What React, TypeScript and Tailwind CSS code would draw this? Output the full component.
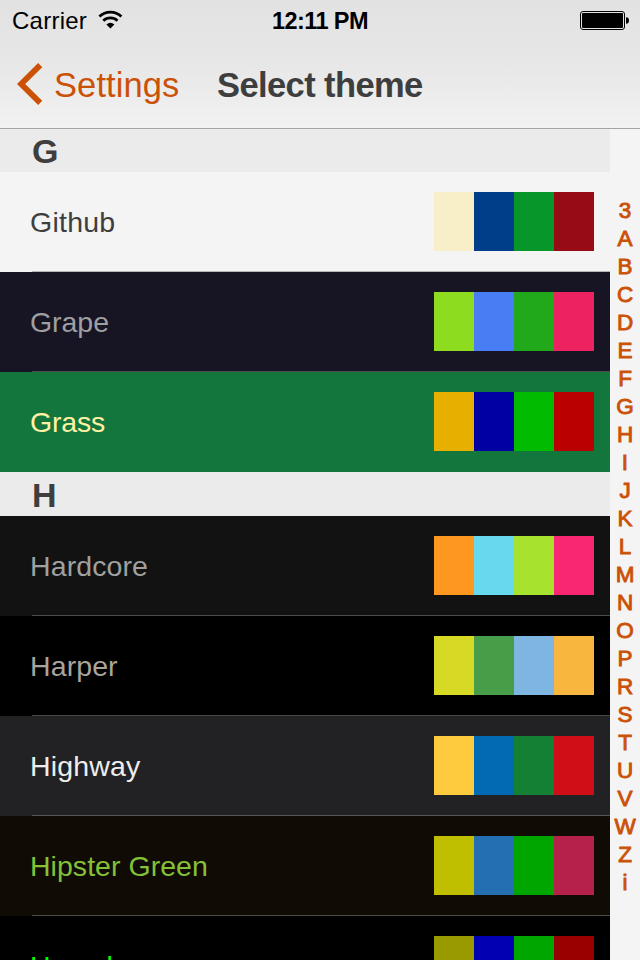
import React from "react";

type Theme = { name: string; row: string; text: string; line: string; swatches: string[] };
type Section = { title: string; height: string; themes: Theme[] };

const sections: Section[] = [
  {
    title: "G",
    height: "h-[43px] pt-[1px]",
    themes: [
      { name: "Github", row: "bg-[#f4f4f4]", text: "text-[#3e3e3e] tracking-[0.25px]", line: "bg-[#b6b5b9]", swatches: ["bg-[#f8eec7]", "bg-[#003e8a]", "bg-[#07962a]", "bg-[#970b16]"] },
      { name: "Grape", row: "bg-[#171423]", text: "text-[#9f9fa1] tracking-[-0.05px]", line: "bg-[#4b494e]", swatches: ["bg-[#8ddc20]", "bg-[#487df4]", "bg-[#22a91b]", "bg-[#ed2261]"] },
      { name: "Grass", row: "bg-[#13773d]", text: "text-[#fff0a5] tracking-[-0.2px]", line: "bg-transparent", swatches: ["bg-[#e7b000]", "bg-[#0000a3]", "bg-[#00bb00]", "bg-[#bb0000]"] },
    ],
  },
  {
    title: "H",
    height: "h-[44px] pt-[2px]",
    themes: [
      { name: "Hardcore", row: "bg-[#121212]", text: "text-[#a0a0a0] tracking-[0.1px]", line: "bg-[#4b4b4b]", swatches: ["bg-[#fd971f]", "bg-[#66d9ef]", "bg-[#a6e22e]", "bg-[#f92672]"] },
      { name: "Harper", row: "bg-[#000000]", text: "text-[#a8a49d] tracking-[0.1px]", line: "bg-[#474747]", swatches: ["bg-[#d6da25]", "bg-[#489e48]", "bg-[#7fb5e1]", "bg-[#f8b63f]"] },
      { name: "Highway", row: "bg-[#222225]", text: "text-[#ededed] tracking-[0.15px]", line: "bg-[#555457]", swatches: ["bg-[#ffcb3e]", "bg-[#006bb3]", "bg-[#138034]", "bg-[#d00e18]"] },
      { name: "Hipster Green", row: "bg-[#100b05]", text: "text-[#84c138] tracking-[0.03px]", line: "bg-[#4d4a47]", swatches: ["bg-[#bfbf00]", "bg-[#246eb2]", "bg-[#00a600]", "bg-[#b6214a]"] },
      { name: "Homebrew", row: "bg-[#000000]", text: "text-[#00ff00] tracking-[0.1px]", line: "bg-[#474747]", swatches: ["bg-[#999900]", "bg-[#0000b2]", "bg-[#00a600]", "bg-[#990000]"] },
    ],
  },
];

const indexLetters = "3ABCDEFGHIJKLMNOPRSTUVWZi".split("");

function StatusBar() {
  return (
    <div className="grid h-[40px] grid-cols-3 items-center text-black">
      <div className="flex h-[40px] items-center pl-[12px]">
        <span className="pt-[2px] text-[24px] leading-[38px] tracking-[0.25px]">Carrier</span>
        <svg className="ml-[11px]" width="25" height="20" viewBox="0 0 25 20" fill="none" stroke="#000">
          <path d="M1.4 6.6A16 16 0 0 1 23.4 6.6" strokeWidth="2.8" />
          <path d="M5.3 10.8A10.3 10.3 0 0 1 19.5 10.8" strokeWidth="2.8" />
          <path d="M8.4 14.5A6.3 6.3 0 0 1 16.4 14.5L12.4 18.6Z" fill="#000" stroke="none" />
        </svg>
      </div>
      <div className="pt-[2px] text-center text-[23.5px] font-bold leading-[38px] tracking-[-0.6px]">12:11 PM</div>
      <div className="flex justify-end pr-[11px]">
        <svg width="49" height="19" viewBox="0 0 49 19">
          <rect x="0.5" y="0.5" width="44" height="18" rx="2.5" fill="none" stroke="#000" />
          <rect x="2" y="2" width="41" height="15" rx="1" fill="#000" />
          <path d="M46 6.3Q49 6.3 49 9.5T46 12.7Z" fill="#000" />
        </svg>
      </div>
    </div>
  );
}

function NavBar() {
  return (
    <div className="flex h-[88px] items-center">
      <svg className="ml-[17px] shrink-0" width="26" height="42" viewBox="0 0 26 42" fill="none">
        <path d="M23.2 2.2L4.1 21L23.2 39.8" stroke="#cb5107" strokeWidth="5.9" />
      </svg>
      <span className="ml-[11px] w-[163px] pt-[1px] text-[34.5px] leading-[40px] tracking-[0.1px] text-[#cb5107]">Settings</span>
      <span className="whitespace-nowrap pt-[1px] text-[34.5px] font-bold leading-[40px] tracking-[-0.6px] text-[#3e3e3e]">Select theme</span>
    </div>
  );
}

function ThemeRow({ theme }: { theme: Theme }) {
  return (
    <div className={`flex h-[100px] shrink-0 flex-col ${theme.row}`}>
      <div className="flex h-[99px] items-center justify-between pl-[30px] pr-[16px]">
        <span className={`text-[28.5px] leading-[36px] ${theme.text}`}>{theme.name}</span>
        <div className="flex h-[59px]">
          {theme.swatches.map((color, i) => (
            <div key={i} className={`w-[40px] ${color}`} />
          ))}
        </div>
      </div>
      <div className={`ml-[32px] h-px ${theme.line}`} />
    </div>
  );
}

export default function App() {
  return (
    <div className="flex h-[960px] w-[640px] flex-col overflow-hidden bg-[#f4f4f4] font-['Liberation_Sans',Arial,sans-serif]">
      <header className="h-[129px] shrink-0 border-b border-[#a4a4a4] bg-linear-to-b from-[#e2e2e2] via-[#e7e7e7] to-[#f2f2f2]">
        <StatusBar />
        <NavBar />
      </header>
      <div className="flex min-h-0 flex-1">
        <main className="flex w-[610px] flex-col overflow-hidden">
          {sections.map((section) => (
            <React.Fragment key={section.title}>
              <h2 className={`flex shrink-0 items-center bg-[#ebebeb] pl-[32px] text-[34px] font-bold leading-[40px] text-[#3e3e3e] ${section.height}`}>{section.title}</h2>
              {section.themes.map((theme) => (
                <ThemeRow key={theme.name} theme={theme} />
              ))}
            </React.Fragment>
          ))}
        </main>
        <nav className="flex w-[30px] flex-col items-center pt-[68px] text-[22.5px] text-[#cb5107] [-webkit-text-stroke:0.9px_#cb5107]">
          {indexLetters.map((letter) => (
            <span key={letter} className="h-[28px] leading-[28px]">{letter}</span>
          ))}
        </nav>
      </div>
    </div>
  );
}
